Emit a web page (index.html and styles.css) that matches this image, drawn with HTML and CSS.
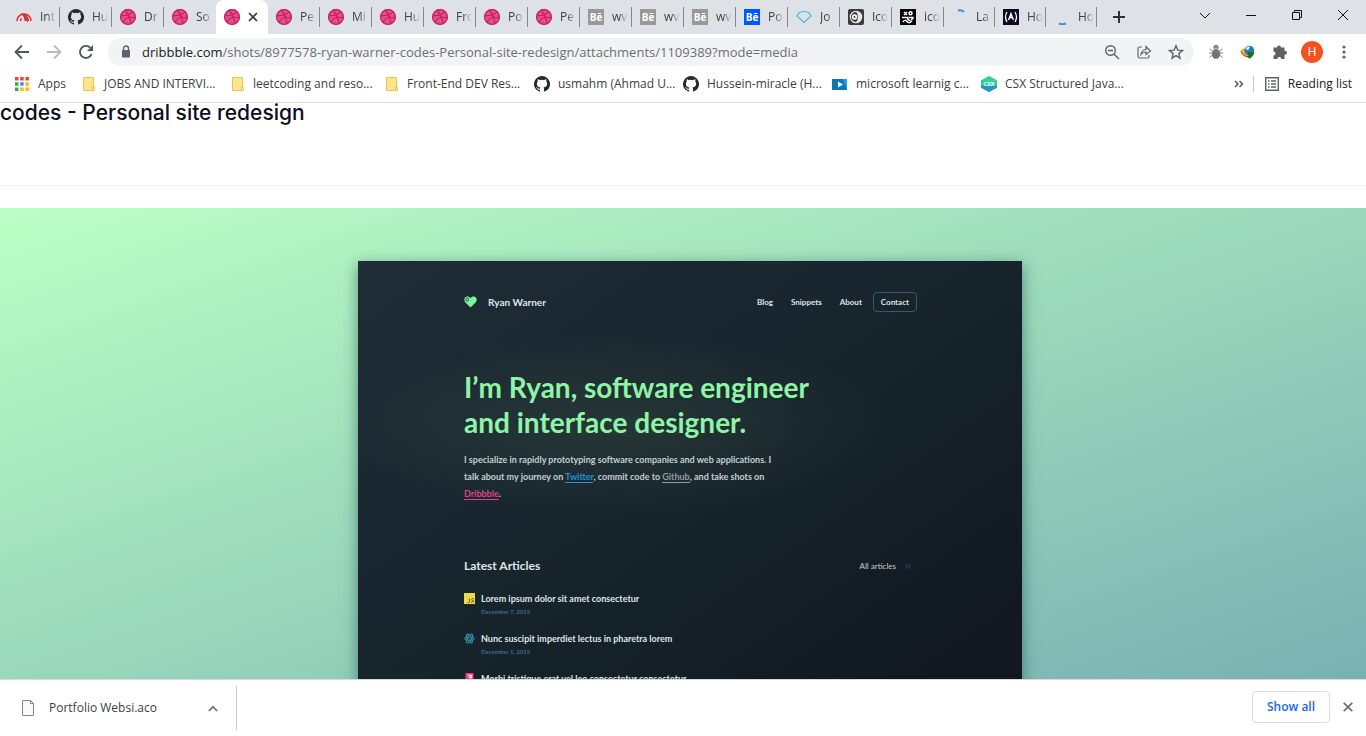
FILE: index.html
```html
<!DOCTYPE html>
<html lang="en">
<head>
<meta charset="utf-8">
<title>Personal site redesign</title>
<link rel="stylesheet" href="styles.css">
</head>
<body>
<svg class="sprite" aria-hidden="true">
  <symbol id="dribbble" viewBox="0 0 16 16"><circle cx="8" cy="8" r="8" fill="#ea4c89"/><g fill="none" stroke="#b8215f" stroke-width="1.1"><circle cx="8" cy="8" r="7.4"/><path d="M5.2 1.2C8 4.500 10 8.500 11 14.500M.8 6.800C6 7 10.500 5.600 13 2.500M3 13.500C5 9 9.500 7.300 15.300 8.800"/></g></symbol>
  <symbol id="github" viewBox="0 0 16 16"><path fill="#24292f" d="M8 0a8 8 0 0 0-2.530 15.590c.4.070.550-.170.550-.380v-1.490c-2.230.480-2.700-.940-2.700-.940-.360-.930-.890-1.170-.890-1.170-.730-.5.050-.490.050-.490.810.060 1.230.830 1.230.830.720 1.230 1.880.880 2.340.670.070-.520.280-.880.510-1.080-1.780-.2-3.640-.890-3.640-3.950 0-.870.310-1.590.820-2.150-.080-.2-.360-1.020.080-2.120 0 0 .670-.210 2.200.820a7.600 7.600 0 0 1 4 0c1.530-1.040 2.200-.820 2.200-.820.440 1.100.160 1.920.080 2.120.510.560.820 1.270.820 2.150 0 3.070-1.870 3.750-3.650 3.950.290.250.540.730.540 1.480v2.190c0 .210.150.460.550.380A8 8 0 0 0 8 0z"/></symbol>
  <symbol id="folder" viewBox="0 0 14 16"><path fill="#ffe38d" stroke="#e8c452" d="M1.500 1.500h10v10h1v2.500l-1 .5h-10z"/><path d="M10.500 14v-3h2v3z" fill="#fff0b8" stroke="#e8c452"/></symbol>
</svg>
<div class="browser">
  <header class="tabstrip">
    <nav class="tabs" aria-label="Tabs">
      <button class="tab"><svg class="fav" viewBox="0 0 16 16"><path d="M1 12a7 7 0 0 1 14 0" fill="none" stroke="#e0262e" stroke-width="1.500"/><path d="M4.500 12a3.500 3.500 0 0 1 1-2.500M6 4.500l6 8M8 6c3 1 4 3 4.500 6M8.500 8.500l1 3.500" fill="none" stroke="#e0262e" stroke-width="1.400"/></svg><span>Int</span></button>
      <button class="tab"><svg class="fav"><use href="#github"/></svg><span>Hu</span></button>
      <button class="tab"><svg class="fav"><use href="#dribbble"/></svg><span>Dr</span></button>
      <button class="tab before"><svg class="fav"><use href="#dribbble"/></svg><span>So</span></button>
      <button class="tab active" aria-label="Current tab"><svg class="fav"><use href="#dribbble"/></svg><svg class="close" viewBox="0 0 10 10"><path d="M1 1l8 8M9 1L1 9" stroke="#35383c" stroke-width="1.700"/></svg></button>
      <button class="tab"><svg class="fav"><use href="#dribbble"/></svg><span>Pe</span></button>
      <button class="tab"><svg class="fav"><use href="#dribbble"/></svg><span>Mi</span></button>
      <button class="tab"><svg class="fav"><use href="#dribbble"/></svg><span>Hu</span></button>
      <button class="tab"><svg class="fav"><use href="#dribbble"/></svg><span>Fro</span></button>
      <button class="tab"><svg class="fav"><use href="#dribbble"/></svg><span>Po</span></button>
      <button class="tab"><svg class="fav"><use href="#dribbble"/></svg><span>Pe</span></button>
      <button class="tab"><b class="fav be">Bē</b><span>wv</span></button>
      <button class="tab"><b class="fav be">Bē</b><span>wv</span></button>
      <button class="tab"><b class="fav be">Bē</b><span>wv</span></button>
      <button class="tab"><b class="fav be blue">Bē</b><span>Po</span></button>
      <button class="tab"><svg class="fav" viewBox="0 0 16 16"><path d="M3.500 3.500Q8 1.500 12.500 3.500L15 7 8 13.500 1 7z" fill="none" stroke="#4fb5ea" stroke-width="1.200"/></svg><span>Jo</span></button>
      <button class="tab"><svg class="fav" viewBox="0 0 16 16"><rect width="16" height="16" rx="2" fill="#3b3b3b"/><circle cx="8" cy="8" r="5.700" fill="none" stroke="#e8e8e8" stroke-width="1.200"/><path d="M8 2.500a5.500 5.500 0 0 1 0 11q4-5.500 0-11z" fill="#e8e8e8"/><circle cx="6.500" cy="8" r="2.700" fill="#fff"/><circle cx="6.500" cy="8" r="1" fill="#3b3b3b"/></svg><span>Ico</span></button>
      <button class="tab"><svg class="fav" viewBox="0 0 16 16"><rect width="16" height="16" fill="#000"/><g fill="none" stroke="#fff" stroke-width="1.500"><path d="M4 3l3 3M7 3L4 6M2 8.500h5.500q0 3 3 3M8.500 8.500H13q0 2-2 2M3 13q2-3 4-.5t5-.5"/><circle cx="10.500" cy="4.300" r="1.500"/></g></svg><span>ico</span></button>
      <button class="tab narrow"><svg class="fav" viewBox="0 0 16 16"><path d="M6 1.500q4-1 6 1.500" fill="none" stroke="#4285f4" stroke-width="2"/></svg><span>La</span></button>
      <button class="tab narrow"><svg class="fav" viewBox="0 0 16 16"><rect width="16" height="16" fill="#0a0a23"/><path d="M4 3q-3 5 0 10M12 3q3 5 0 10M5.500 11L8 4.500 10.500 11M6.500 9.500Q8 7 9.500 9.500" fill="none" stroke="#fff" stroke-width="1.300"/></svg><span>Ho</span></button>
      <button class="tab narrow"><svg class="fav" viewBox="0 0 16 16"><path d="M5 14.500q3.500 1.500 7 0" fill="none" stroke="#4285f4" stroke-width="2"/></svg><span>Ho</span></button>
    </nav>
    <button class="newtab" aria-label="New tab"><svg width="14" height="14"><path d="M7 1v12M1 7h12" stroke="#303134" stroke-width="2"/></svg></button>
    <div class="winctl">
      <button aria-label="Search tabs"><svg width="12" height="12" viewBox="0 0 12 12"><path d="M1 4l5 5 5-5"/></svg></button>
      <button aria-label="Minimize"><svg width="12" height="12" viewBox="0 0 12 12"><path d="M1 6.500h10"/></svg></button>
      <button aria-label="Restore"><svg width="12" height="12" viewBox="0 0 12 12"><path d="M1.500 3.500h7v7h-7zM3.500 3.500v-2h7v7h-2"/></svg></button>
      <button aria-label="Close window"><svg width="12" height="12" viewBox="0 0 12 12"><path d="M1 1l10 10M11 1L1 11"/></svg></button>
    </div>
  </header>

  <div class="toolbar">
    <button aria-label="Back"><svg width="16" height="16" viewBox="0 0 16 16"><path d="M15 8H2M8 1.500L1.500 8 8 14.500" fill="none" stroke="#54575b" stroke-width="1.800"/></svg></button>
    <button aria-label="Forward"><svg width="16" height="16" viewBox="0 0 16 16"><path d="M1 8h13M8 1.500L14.500 8 8 14.500" fill="none" stroke="#b9bbbe" stroke-width="1.800"/></svg></button>
    <button aria-label="Reload"><svg width="16" height="16" viewBox="0 0 16 16"><path d="M13.500 10.200A6 6 0 1 1 12.500 4" fill="none" stroke="#54575b" stroke-width="1.900"/><path d="M15 1v6H9z" fill="#54575b"/></svg></button>
    <div class="omnibox">
      <svg width="10" height="14" viewBox="0 0 10 14"><path d="M2.500 6V3.500a2.500 2.500 0 0 1 5 0V6" fill="none" stroke="#5f6368" stroke-width="1.400"/><rect x="1" y="5" width="8" height="7.500" rx="1" fill="#5f6368"/></svg>
      <a class="url" href="#"><span>dribbble.com</span>/shots/8977578-ryan-warner-codes-Personal-site-redesign/attachments/1109389?mode=media</a>
      <button aria-label="Zoom"><svg width="16" height="16" viewBox="0 0 16 16"><path d="M10.200 10.200L15 15M4 6.500h5" stroke="#5f6368" stroke-width="1.500"/><circle cx="6.500" cy="6.500" r="4.800" fill="none" stroke="#5f6368" stroke-width="1.400"/></svg></button>
      <button aria-label="Share"><svg width="16" height="16" viewBox="0 0 16 16"><path d="M6 3H3.500Q2 3 2 4.500v8Q2 14 3.500 14h8q1.500 0 1.500-1.500V11M5 10.500q.5-4.500 5-5V2.500L14.500 7 10 10.500V8q-3-.2-5 2.500z" fill="none" stroke="#5f6368" stroke-width="1.200"/></svg></button>
      <button aria-label="Bookmark"><svg width="16" height="16" viewBox="0 0 16 16"><path d="M8 1.800l1.800 4.300 4.700.4-3.600 3.100 1.100 4.600L8 11.700l-4 2.500 1.100-4.600-3.600-3.100 4.700-.4z" fill="none" stroke="#5f6368" stroke-width="1.400"/></svg></button>
    </div>
    <button class="ext" aria-label="Bug extension"><svg width="16" height="16" viewBox="0 0 16 16"><path d="M1.500 5l3 2M1 9h14M1.500 13.500l3-2.500M14.500 5l-3 2M14.500 13.500l-3-2.500" stroke="#8a8a8a" stroke-width="1"/><circle cx="8" cy="3.500" r="2.700" fill="#8a8a8a"/><ellipse cx="8" cy="10" rx="4.200" ry="5" fill="#757575"/><path d="M5.500 4.800h5" stroke="#ccc" stroke-width=".8"/></svg></button>
    <button class="ext" aria-label="Download manager"><svg width="16" height="16" viewBox="0 0 18 16"><ellipse cx="7" cy="9" rx="6.500" ry="4" transform="rotate(35 7 9)" fill="#eab32c"/><path d="M1 7q2 6 9 6.500" fill="none" stroke="#e4572e" stroke-width="1.500"/><circle cx="10.500" cy="6.500" r="5.500" fill="#2875c7"/><path d="M7 3q3-2 4.500-.5L9 6 6.500 5z" fill="#d8eafa"/><path d="M8.500 8H16q0 4-5 7.500l-4-3h2.500z" fill="#16741f"/></svg></button>
    <button class="ext" aria-label="Extensions"><svg width="16" height="16" viewBox="0 0 16 16"><path d="M5 3.500a2 2 0 0 1 4 0h3.500v3.200h.5a2 2 0 0 1 0 4h-.5V15H9.300a2 2 0 0 0-4 0H1.500v-3.500a2 2 0 0 0 0-4v-4z" fill="#5f6368"/></svg></button>
    <button class="avatar" aria-label="Profile H">H</button>
    <button class="ext" aria-label="Menu"><svg width="4" height="14"><g fill="#5f6368"><circle cx="2" cy="2" r="1.600"/><circle cx="2" cy="7" r="1.600"/><circle cx="2" cy="12" r="1.600"/></g></svg></button>
  </div>

  <nav class="bookmarks" aria-label="Bookmarks">
    <a href="#" class="apps"><svg width="14" height="14" viewBox="0 0 14 14"><g fill="#ea4335"><path d="M0 0h3.500v3.500H0zM5.200 0h3.500v3.500H5.200zM10.400 0h3.500v3.500h-3.500z"/></g><path d="M0 5.200h3.500v3.500H0zM0 10.400h3.500v3.500H0z" fill="#34a853"/><path d="M5.200 5.200h3.500v3.500H5.200z" fill="#4285f4"/><path d="M10.400 5.200h3.500v3.500h-3.500zM5.200 10.400h3.500v3.500H5.200zM10.400 10.400h3.500v3.500h-3.500z" fill="#fbbc04"/></svg>Apps</a>
    <a href="#" class="mark"><svg width="14" height="16"><use href="#folder"/></svg><span>JOBS AND INTERVI...</span></a>
    <a href="#" class="mark wide"><svg width="14" height="16"><use href="#folder"/></svg><span>leetcoding and reso...</span></a>
    <a href="#" class="mark"><svg width="14" height="16"><use href="#folder"/></svg><span>Front-End DEV Res...</span></a>
    <a href="#" class="mark"><svg width="16" height="16"><use href="#github"/></svg><span>usmahm (Ahmad U...</span></a>
    <a href="#" class="mark"><svg width="16" height="16"><use href="#github"/></svg><span>Hussein-miracle (H...</span></a>
    <a href="#" class="mark"><svg width="16" height="16" viewBox="0 0 16 16"><rect y="3" width="15" height="11" fill="#1fa2dc"/><path d="M0 3h11l4 11H0z" fill="#1176b4"/><path d="M6 5.500l5 3-5 3z" fill="#fff"/></svg><span>microsoft learnig c...</span></a>
    <a href="#" class="mark"><svg width="16" height="16" viewBox="0 0 16 16"><path d="M8 0l8 4.200v7.600L8 16l-8-4.200V4.200z" fill="#2fd09a"/><path d="M0 9.500h16v2.300L8 16l-8-4.200z" fill="#2a94c0"/><text x="8" y="10" text-anchor="middle" class="csx">CSX</text></svg><span>CSX Structured Java...</span></a>
    <button class="more" aria-label="More bookmarks"><svg width="10" height="8" viewBox="0 0 10 8"><path d="M1 1l3 3-3 3M5.500 1l3 3-3 3" fill="none" stroke="#54575b" stroke-width="1.500"/></svg></button>
    <button class="reading"><svg width="14" height="14" viewBox="0 0 14 14"><path d="M.7.700h12.600v12.600H.7z" fill="none" stroke="#5f6368" stroke-width="1.400"/><path d="M3 4h1.500M6 4h5M3 7h1.500M6 7h5M3 10h1.500M6 10h5" stroke="#5f6368" stroke-width="1.400"/></svg>Reading list</button>
  </nav>

  <main class="page">
    <h1 class="title">codes - Personal site redesign</h1>
    <div class="shot">
      <article class="site">
        <header class="site-head">
          <svg width="13" height="12" viewBox="0 0 13 12"><path d="M6.500 11.500L1.200 6.200C-.8 3.500.7.500 3.300.5c1.500 0 2.500.6 3.200 1.700C7.200 1.100 8.200.5 9.700.5c2.600 0 4.100 3 2.100 5.700z" fill="#7cf59b"/><circle cx="3.200" cy="3.500" r="1.500" fill="none" stroke="#24584a"/></svg>
          <strong>Ryan Warner</strong>
          <nav><a href="#">Blog</a><a href="#">Snippets</a><a href="#">About</a><a href="#" class="contact">Contact</a></nav>
        </header>
        <h2>I’m Ryan, software engineer<br>and interface designer.</h2>
        <p class="intro">I specialize in rapidly prototyping software companies and web applications. I<br>talk about my journey on <a class="tw" href="#">Twitter</a>, commit code to <a class="gh" href="#">Github</a>, and take shots on<br><a class="dr" href="#">Dribbble</a>.</p>
        <div class="list-head"><h3>Latest Articles</h3><a href="#">All articles<svg width="6" height="6" viewBox="0 0 6 6"><path d="M.5.500L2.500 3 .5 5.500M3.500.500L5.500 3 3.500 5.500" fill="none" stroke="#31536b"/></svg></a></div>
        <ul>
          <li><svg width="11" height="11" viewBox="0 0 11 11"><rect width="11" height="11" fill="#ecd94c"/><path d="M5.500 5.500v3q0 1.500-2 1M10 6q-2.500-1-2.500.5T9.500 8t-2.500 1.500" fill="none" stroke="#65622d"/></svg><div><a href="#">Lorem ipsum dolor sit amet consectetur</a><time>December 7, 2019</time></div></li>
          <li><svg width="11" height="11" viewBox="0 0 11 11"><g fill="#245566" stroke="#3f9ab0" stroke-width=".9" fill-opacity=".5"><ellipse cx="5.500" cy="5.500" rx="5" ry="2"/><ellipse cx="5.500" cy="5.500" rx="5" ry="2" transform="rotate(60 5.500 5.500)"/><ellipse cx="5.500" cy="5.500" rx="5" ry="2" transform="rotate(120 5.500 5.500)"/></g></svg><div><a href="#">Nunc suscipit imperdiet lectus in pharetra lorem</a><time>December 1, 2019</time></div></li>
          <li><svg width="11" height="11" viewBox="0 0 11 11"><path d="M1.500 0h8v11l-8-2z" fill="#f33c78"/><path d="M4 2.500h3.500v2H5" fill="none" stroke="#ffe3ee" stroke-width="1.400"/></svg><div><a href="#">Morbi tristique erat vel leo consectetur consectetur</a></div></li>
        </ul>
      </article>
    </div>
  </main>

  <footer class="downloads">
    <button class="file"><svg width="12" height="16" viewBox="0 0 12 16"><path d="M.5.500h8l3 3v12H.5zM8.500.500v3h3" fill="#f8f9fa" stroke="#858585"/></svg><span>Portfolio Websi.aco</span><svg width="10" height="7" viewBox="0 0 10 7"><path d="M.8 6L5 1.800 9.200 6" fill="none" stroke="#737373" stroke-width="1.700"/></svg></button>
    <button class="showall">Show all</button>
    <button class="dismiss" aria-label="Close downloads"><svg width="10" height="10" viewBox="0 0 10 10"><path d="M.8.800l8.400 8.400M9.200.800L.8 9.200" stroke="#707377" stroke-width="1.900"/></svg></button>
  </footer>
</div>
</body>
</html>
```
FILE: styles.css
```css
* { box-sizing: border-box; }
body { margin: 0; font: 12px/16px "Open Sans", "Noto Sans", sans-serif; color: #3c4043; background: #fff; }
button { font: inherit; color: inherit; border: 0; padding: 0; margin: 0; background: none; display: flex; align-items: center; justify-content: center; }
a { color: inherit; text-decoration: none; }
svg { display: block; flex: none; }
.sprite { position: absolute; width: 0; height: 0; }
.browser { height: 100vh; display: flex; flex-direction: column; padding-bottom: 6px; overflow: hidden; }

.tabstrip { flex: none; height: 34px; display: flex; background: #dee1e6; padding-left: 8px; }
.tabs { display: flex; flex: none; }
.tab { flex: 0 0 52px; justify-content: flex-start; gap: 8px; padding-left: 8px; background: linear-gradient(#85888c, #85888c) right 7px / 1px 20px no-repeat; }
.tab.narrow { flex-basis: 51px; }
.tab span { width: 18px; white-space: nowrap; text-align: left; -webkit-mask-image: linear-gradient(90deg, #000 7px, transparent 16px); mask-image: linear-gradient(90deg, #000 7px, transparent 16px); }
.tab.before { background: none; }
.tab.active { background: #fff; border-radius: 8px 8px 0 0; }
.fav { width: 16px; height: 16px; flex: none; }
.close { width: 10px; height: 10px; }
.be { background: #999; color: #fff; font: bold 10px/16px "Open Sans", sans-serif; text-align: center; }
.be.blue { background: #0057ff; }
.newtab { width: 44px; }
.winctl { display: flex; margin-left: auto; padding: 0 17px 5px 0; gap: 34px; }
.winctl path { fill: none; stroke: #111; }

.toolbar { flex: none; height: 36px; display: flex; align-items: center; padding: 0 14px; gap: 16px; }
.omnibox { flex: 1; min-width: 0; height: 28px; display: flex; align-items: center; gap: 16px; padding: 0 10px 0 13px; border-radius: 14px; background: #f1f3f4; margin: 0 -2px; }
.url { flex: 1; min-width: 0; overflow: hidden; white-space: nowrap; font-size: 13px; line-height: 20px; color: #6b6f74; margin-left: -5px; }
.url span { color: #202124; }
.ext { width: 16px; }
.avatar { width: 22px; height: 22px; margin: 0 -3px; border-radius: 11px; background: #f4511e; color: #fff; font-family: Roboto, sans-serif; }

.bookmarks { flex: none; height: 33px; display: flex; align-items: center; padding: 0 14px 4px 15px; border-bottom: 1px solid #d9dbde; white-space: nowrap; }
.bookmarks a { display: flex; align-items: center; gap: 9px; }
.apps { width: 67px; }
.bookmarks .mark { width: 149px; gap: 8px; }
.bookmarks .wide { width: 154px; }
.csx { font: bold 6px "Open Sans", sans-serif; fill: #fff; }
.more { margin-left: auto; padding-right: 9px; }
.reading { gap: 9px; color: #202124; border-left: 1px solid #c4c7ca; padding-left: 11px; }

.page { flex: 1; min-height: 0; overflow: hidden; display: flex; flex-direction: column; }
.title { margin: 0; height: 83px; flex: none; border-bottom: 1px solid #f0f0f2; color: #0d0c22; font: 500 21px/20px Inter, sans-serif; white-space: nowrap; }
.shot { flex: 1; min-height: 0; margin-top: 22px; padding: 53px 0 0 14px; overflow: hidden; display: flex; justify-content: center; background: linear-gradient(to bottom right, #bbffc5, #79b0b2); }
.site { width: 664px; height: 620px; flex: none; padding: 31px 105px 0 106px; background: radial-gradient(280px 90px at 260px 165px, rgba(130, 170, 110, .13), transparent), linear-gradient(145deg, #1f2d37, #16232b 45%, #111820 75%); box-shadow: 0 4px 14px rgba(10, 50, 50, .5); font-family: Lato, sans-serif; color: #dfe6ea; white-space: nowrap; }
.site-head { display: flex; align-items: center; }
.site-head strong { margin-left: 11px; font-size: 10px; }
.site-head nav { margin-left: auto; display: flex; align-items: center; font-size: 8px; font-weight: bold; gap: 18px; }
.contact { border: 1px solid #315a76; border-radius: 4px; padding: 1px 7px; margin-left: -7px; }
.site h2 { margin: 58px 0 0; font: bold 28px/35px Lato, sans-serif; color: #8ff5a6; }
.intro { margin: 11px 0 0; font-size: 9px; line-height: 17px; font-weight: bold; color: #c5ced3; }
.intro a { border-bottom: 1px solid; }
.intro .tw { color: #2492d8; }
.intro .gh { color: #909ba2; }
.intro .dr { color: #dc4485; }
.list-head { display: flex; justify-content: space-between; align-items: center; margin-top: 55px; padding-right: 6px; }
.list-head h3 { margin: 0; font-size: 12px; line-height: 18px; }
.list-head a { display: flex; align-items: center; gap: 9px; font-size: 8px; color: #c5ced3; }
.site ul { list-style: none; margin: 16px 0 0; padding: 0; }
.site li { display: flex; gap: 6px; height: 40px; font-size: 9px; line-height: 15px; font-weight: bold; }
.site li svg { margin-top: 2px; }
.site li a, .site time { display: block; }
.site time { font-size: 6px; line-height: 12px; color: #3c6c86; }

.downloads { flex: none; height: 51px; border-top: 1px solid #d5dcdc; display: flex; align-items: center; padding: 4px 13px 0 0; }
.file { width: 237px; height: 44px; align-self: flex-end; border-right: 1px solid #c7c7c7; justify-content: flex-start; padding: 0 18px 0 22px; }
.file span { margin-left: 15px; flex: 1; text-align: left; }
.showall { width: 78px; height: 32px; margin-left: auto; border: 1px solid #dadce0; border-radius: 4px; color: #1a68e0; font-weight: 600; }
.dismiss { margin-left: 13px; }
```
